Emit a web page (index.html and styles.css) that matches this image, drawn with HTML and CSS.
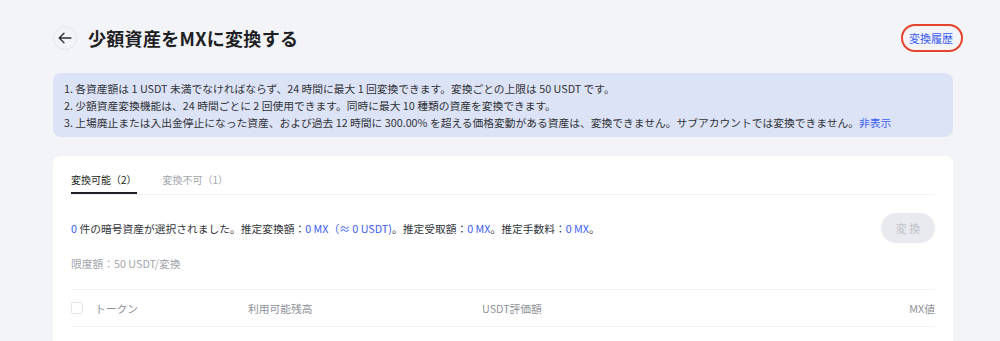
FILE: index.html
```html
<!DOCTYPE html>
<html lang="ja">
<head>
<meta charset="utf-8">
<title>少額資産をMXに変換する</title>
<link rel="stylesheet" href="styles.css">
</head>
<body>
<div class="page">
  <header class="head">
    <div class="head-left">
      <button class="back" aria-label="戻る">
        <svg width="14" height="12" viewBox="0 0 14 12" fill="none" stroke="#2b2e33" stroke-width="1.3" stroke-linecap="round" stroke-linejoin="round"><path d="M13 6H1.5M6 1.2L1.2 6L6 10.8"/></svg>
      </button>
      <h1 class="title">少額資産をMXに変換する</h1>
    </div>
    <a class="history" href="#">変換履歴</a>
  </header>

  <div class="notice">
    <p>1. 各資産額は 1 USDT 未満でなければならず、24 時間に最大 1 回変換できます。変換ごとの上限は 50 USDT です。</p>
    <p>2. 少額資産変換機能は、24 時間ごとに 2 回使用できます。同時に最大 10 種類の資産を変換できます。</p>
    <p>3. 上場廃止または入出金停止になった資産、および過去 12 時間に 300.00% を超える価格変動がある資産は、変換できません。サブアカウントでは変換できません。<a class="link" href="#">非表示</a></p>
  </div>

  <section class="card">
    <div class="tabs">
      <span class="tab active">変換可能（2）</span>
      <span class="tab">変換不可（1）</span>
    </div>
    <div class="summary">
      <p class="summary-text"><span class="blue">0</span> 件の暗号資産が選択されました。推定変換額：<span class="blue">0 MX（≈ 0 USDT)</span>。推定受取額：<span class="blue">0 MX</span>。推定手数料：<span class="blue">0 MX</span>。</p>
      <button class="convert" disabled>変 換</button>
    </div>
    <p class="limit">限度額：50 USDT/変換</p>
    <div class="thead">
      <div class="col col-token"><span class="check"></span>トークン</div>
      <div class="col col-bal">利用可能残高</div>
      <div class="col col-usdt">USDT評価額</div>
      <div class="col col-mx">MX値</div>
    </div>
  </section>
</div>
</body>
</html>
```
FILE: styles.css
```css
* { box-sizing: border-box; }
html, body { margin: 0; padding: 0; }
body {
  background: #f3f4f8;
  font-family: "Noto Sans CJK JP", "Noto Sans", sans-serif;
  color: #31343a;
  font-size: 10.75px;
}
.page {
  width: 900px;
  margin-left: 53px;
}
.head {
  display: flex;
  align-items: center;
  justify-content: space-between;
  height: 24px;
  margin-top: 26px;
}
.head-left { display: flex; align-items: center; gap: 11px; }
.back {
  width: 24px;
  height: 24px;
  border-radius: 50%;
  border: 1px solid #e3e5ea;
  background: #f3f4f8;
  display: flex;
  align-items: center;
  justify-content: center;
  padding: 0;
}
.title {
  margin: 0;
  font-size: 18px;
  font-weight: 700;
  color: #1d1f24;
  line-height: 24px;
  letter-spacing: 0.3px;
}
.history {
  position: relative;
  color: #3b5cf5;
  text-decoration: none;
  font-size: 11px;
  line-height: 16px;
}
.history::after {
  content: "";
  position: absolute;
  left: -8px;
  right: -10px;
  top: -6px;
  bottom: -6px;
  border: 2px solid #e5432c;
  border-radius: 14px;
}
.notice {
  margin-top: 23px;
  background: #dde3f6;
  border-radius: 8px;
  padding: 7px 11px 6px;
}
.notice p {
  margin: 0;
  line-height: 17px;
  color: #2f3237;
}
.link { color: #3b5cf5; text-decoration: none; }
.card {
  margin-top: 19px;
  background: #ffffff;
  border-radius: 8px 8px 0 0;
  padding: 0 18px 20px;
}
.tabs {
  display: flex;
  gap: 26px;
  padding-top: 14px;
  border-bottom: 1px solid #f2f3f6;
}
.tab {
  font-size: 10px;
  line-height: 20px;
  padding-bottom: 2px;
  border-bottom: 2px solid transparent;
  color: #a3a6ad;
}
.tab.active {
  color: #1d1f24;
  border-bottom-color: #1d1f24;
}
.summary {
  display: flex;
  align-items: center;
  justify-content: space-between;
  margin-top: 18px;
}
.summary-text { margin: 0; line-height: 17px; }
.blue { color: #3b5cf5; }
.convert {
  width: 54px;
  height: 30px;
  border: none;
  border-radius: 15px;
  background: #e9eaef;
  color: #c0c3ca;
  font-family: inherit;
  font-size: 11px;
  padding: 0;
}
.limit {
  margin: 12px 0 0;
  line-height: 18px;
  color: #a3a6ad;
}
.thead {
  margin-top: 16px;
  display: grid;
  grid-template-columns: 177px 234px 1fr 120px;
  align-items: center;
  height: 38px;
  border-top: 1px solid #f2f3f6;
  border-bottom: 1px solid #f2f3f6;
  color: #8e9198;
}
.col-token { display: flex; align-items: center; gap: 12px; }
.check {
  width: 12px;
  height: 12px;
  border: 1px solid #e2e4e9;
  border-radius: 2px;
  background: #fff;
}
.col-mx { text-align: right; }
```
